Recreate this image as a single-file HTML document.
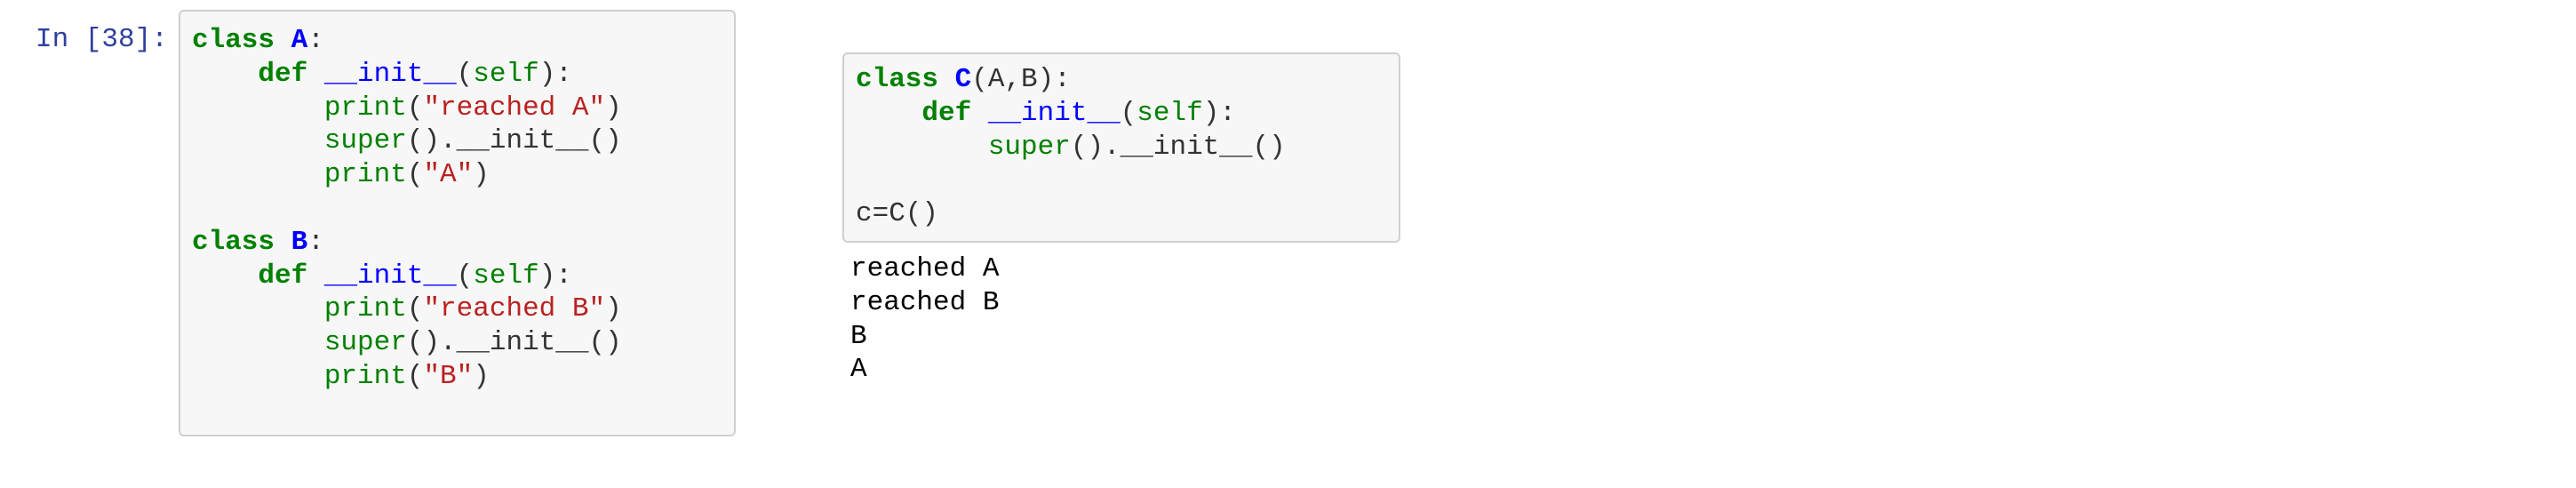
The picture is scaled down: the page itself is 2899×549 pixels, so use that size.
<!DOCTYPE html>
<html><head><style>
body{margin:0;width:2899px;height:549px;background:#fff;position:relative;overflow:hidden;font-family:"Liberation Mono",monospace;}
pre{margin:0;font-family:"Liberation Mono",monospace;font-size:31px;line-height:37.8px;white-space:pre;}
.box{position:absolute;background:#f7f7f7;border:2px solid #cfcfcf;border-radius:6px;box-sizing:border-box;}
.k{color:#008000;font-weight:bold}.n{color:#0000ff;font-weight:bold}.f{color:#0000ff}.b{color:#008000}.s{color:#ba2121}.p{color:#333}
</style></head><body>
<pre style="position:absolute;left:40px;top:26px;color:#303f9f">In [38]:</pre>
<div class="box" style="left:201px;top:11px;width:627px;height:480px">
<pre style="position:absolute;left:13px;top:14px" class="p"><span class="k">class</span> <span class="n">A</span>:
    <span class="k">def</span> <span class="f">__init__</span>(<span class="b">self</span>):
        <span class="b">print</span>(<span class="s">"reached A"</span>)
        <span class="b">super</span>().<span>__init__</span>()
        <span class="b">print</span>(<span class="s">"A"</span>)

<span class="k">class</span> <span class="n">B</span>:
    <span class="k">def</span> <span class="f">__init__</span>(<span class="b">self</span>):
        <span class="b">print</span>(<span class="s">"reached B"</span>)
        <span class="b">super</span>().<span>__init__</span>()
        <span class="b">print</span>(<span class="s">"B"</span>)</pre>
</div>
<div class="box" style="left:948px;top:59px;width:628px;height:214px">
<pre style="position:absolute;left:13px;top:10px" class="p"><span class="k">class</span> <span class="n">C</span>(A,B):
    <span class="k">def</span> <span class="f">__init__</span>(<span class="b">self</span>):
        <span class="b">super</span>().__init__()

c=C()</pre>
</div>
<pre style="position:absolute;left:957px;top:284px;color:#000">reached A
reached B
B
A</pre>
</body></html>
